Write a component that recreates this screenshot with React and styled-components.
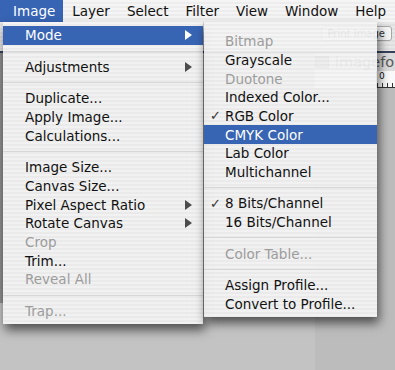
import React from 'react';
import styled, { createGlobalStyle, css } from 'styled-components';

const GlobalStyle = createGlobalStyle`
  html, body {
    margin: 0;
    padding: 0;
    background: #c3c3c3;
  }
`;

const BLUE = '#3764b3';
const ROW = '18.7px';

const Screen = styled.div`
  position: relative;
  width: 395px;
  height: 370px;
  overflow: hidden;
  background: #c3c3c3;
  font-family: "DejaVu Sans", "Liberation Sans", sans-serif;
  font-size: 13.5px;
  color: #111;
  display: flex;
  flex-direction: column;
`;

const MenuBar = styled.div`
  display: flex;
  height: 22px;
  background: repeating-linear-gradient(to bottom, #f5f5f5 0 2px, #ededed 2px 4px);
  position: relative;
  z-index: 3;
`;

const MenuTitle = styled.div`
  position: relative;
  line-height: 22px;
  padding: 0 8px 0 ${p => p.$lead || 9}px;
  white-space: nowrap;
  ${p => p.$active && css`
    background: ${BLUE};
    color: #fff;
  `}
`;

// background Photoshop window, only partly visible through the menus
const OptionsBar = styled.div`
  height: 29px;
  background: repeating-linear-gradient(to bottom, #e8e8e8 0 2px, #e0e0e0 2px 4px);
  border-bottom: 2px solid #36425c;
  display: flex;
  justify-content: flex-end;
  align-items: center;
`;

const BarButton = styled.div`
  margin-right: 3px;
  margin-top: -6px;
  padding: 1px 6px;
  font-size: 10px;
  color: #333;
  background: #f6f6f6;
  border: 1px solid #a8a8a8;
  border-radius: 3px;
`;

const DocArea = styled.div`
  flex: 1;
  display: flex;
  justify-content: space-between;
`;

const LeftEdge = styled.div`
  width: 3px;
  height: 250px;
  background: #8e8e8e;
`;

const DocWindow = styled.div`
  width: 80px;
  display: flex;
  flex-direction: column;
`;

const DocTitle = styled.div`
  height: 18px;
  background: #dcdcdc;
  display: flex;
  align-items: center;
  gap: 6px;
  font-size: 14.5px;
  color: #5a5a5a;
  white-space: nowrap;
  overflow: hidden;
`;

const DocIcon = styled.span`
  width: 12px;
  height: 10px;
  background: #8a8a8a;
  border: 1px solid #666;
  flex: none;
`;

const Ruler = styled.div`
  height: 17px;
  display: flex;
`;

const RulerCorner = styled.div`
  width: 61px;
  background: #f4f4f4;
  border-right: 1px solid #222;
`;

const RulerScale = styled.div`
  flex: 1;
  background:
    repeating-linear-gradient(to right, #333 0 1px, transparent 1px 5px) bottom left / 100% 4px no-repeat,
    #fafafa;
  border-bottom: 1px solid #333;
  font-size: 9px;
  padding-left: 2px;
  line-height: 11px;
`;

const DocBody = styled.div`
  flex: 1;
  background: #bcbcbc;
`;

// menus
const Menu = styled.div`
  position: absolute;
  top: ${p => p.$top}px;
  left: ${p => p.$left};
  width: ${p => p.$width}px;
  padding: ${p => p.$pad};
  background: repeating-linear-gradient(to bottom, rgba(245,245,245,0.93) 0 2px, rgba(237,237,237,0.93) 2px 4px);
  box-shadow: 2px 6px 10px rgba(0, 0, 0, 0.6);
  color: #111;
  z-index: 4;
`;

const Item = styled.div`
  position: relative;
  height: ${ROW};
  display: flex;
  align-items: center;
  padding-left: ${p => p.$indent}px;
  white-space: nowrap;
  color: ${p => (p.$disabled ? '#9c9c9c' : '#111')};
  ${p => p.$active && css`
    background: ${BLUE};
    color: #fff;
  `}
`;

const Check = styled.span`
  width: 15px;
  font-size: 13px;
  color: #333;
`;

const Arrow = styled.span`
  margin-left: auto;
  margin-right: 11px;
  width: 0;
  height: 0;
  border-top: 5px solid transparent;
  border-bottom: 5px solid transparent;
  border-left: 7px solid ${p => (p.$active ? '#fff' : '#4c4c4c')};
`;

const Separator = styled.div`
  height: 12.8px;
  display: flex;
  align-items: center;
  &::after {
    content: '';
    flex: 1;
    height: 1px;
    background: #d6d6d6;
  }
`;

const modeItems = [
  { label: 'Bitmap', disabled: true },
  { label: 'Grayscale' },
  { label: 'Duotone', disabled: true },
  { label: 'Indexed Color...' },
  { label: 'RGB Color', checked: true },
  { label: 'CMYK Color', active: true },
  { label: 'Lab Color' },
  { label: 'Multichannel' },
  'sep',
  { label: '8 Bits/Channel', checked: true },
  { label: '16 Bits/Channel' },
  'sep',
  { label: 'Color Table...', disabled: true },
  'sep',
  { label: 'Assign Profile...' },
  { label: 'Convert to Profile...' },
];

const imageItems = [
  'sep',
  { label: 'Adjustments', sub: true },
  'sep',
  { label: 'Duplicate...' },
  { label: 'Apply Image...' },
  { label: 'Calculations...' },
  'sep',
  { label: 'Image Size...' },
  { label: 'Canvas Size...' },
  { label: 'Pixel Aspect Ratio', sub: true },
  { label: 'Rotate Canvas', sub: true },
  { label: 'Crop', disabled: true },
  { label: 'Trim...' },
  { label: 'Reveal All', disabled: true },
  'sep',
  { label: 'Trap...', disabled: true },
];

function SubMenu() {
  return (
    <Menu $top={-4} $left="calc(100% + 1px)" $width={173} $pad="9.8px 0 4px">
      {modeItems.map((it, i) =>
        it === 'sep' ? (
          <Separator key={i} />
        ) : (
          <Item key={i} $indent={6} $disabled={it.disabled} $active={it.active}>
            <Check>{it.checked ? '✓' : ''}</Check>
            {it.label}
          </Item>
        )
      )}
    </Menu>
  );
}

function ImageMenu() {
  return (
    <Menu $top={22} $left="3px" $width={200} $pad="4px 0 4px">
      <Item $indent={22} $active>
        Mode
        <Arrow $active />
        <SubMenu />
      </Item>
      {imageItems.map((it, i) =>
        it === 'sep' ? (
          <Separator key={i} />
        ) : (
          <Item key={i} $indent={22} $disabled={it.disabled}>
            {it.label}
            {it.sub && <Arrow />}
          </Item>
        )
      )}
    </Menu>
  );
}

export default function App() {
  const titles = ['Layer', 'Select', 'Filter', 'View', 'Window', 'Help'];
  return (
    <Screen>
      <GlobalStyle />
      <MenuBar>
        <MenuTitle $lead={13} $active>Image</MenuTitle>
        {titles.map(t => (
          <MenuTitle key={t}>{t}</MenuTitle>
        ))}
      </MenuBar>
      <OptionsBar>
        <BarButton>Print Image</BarButton>
      </OptionsBar>
      <DocArea>
        <LeftEdge />
        <DocWindow>
          <DocTitle>
            <DocIcon />
            imageforeground
          </DocTitle>
          <Ruler>
            <RulerCorner />
            <RulerScale>0</RulerScale>
          </Ruler>
          <DocBody />
        </DocWindow>
      </DocArea>
      <ImageMenu />
    </Screen>
  );
}
